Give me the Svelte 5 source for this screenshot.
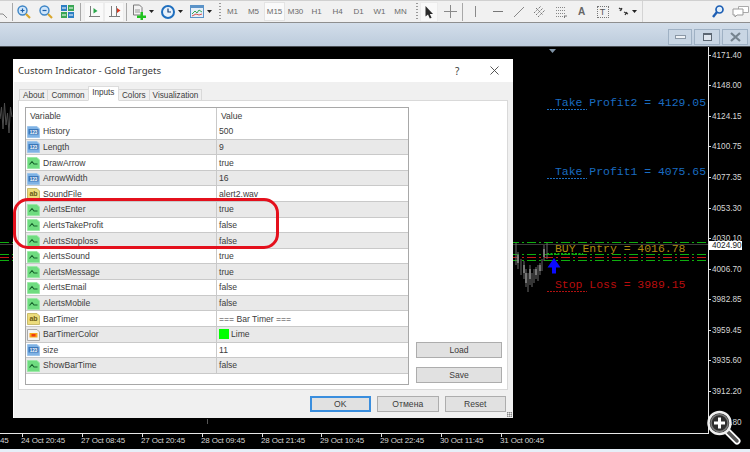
<script>
  const rows = [
    ['num','History','500'],['num','Length','9'],['bool','DrawArrow','true'],['num','ArrowWidth','16'],
    ['str','SoundFile','alert2.wav'],['bool','AlertsEnter','true'],['bool','AlertsTakeProfit','false'],['bool','AlertsStoploss','false'],
    ['bool','AlertsSound','true'],['bool','AlertsMessage','true'],['bool','AlertsEmail','false'],['bool','AlertsMobile','false'],
    ['str','BarTimer','=== Bar Timer ==='],['color','BarTimerColor','Lime'],['num','size','11'],['bool','ShowBarTime','false']
  ];
  const prices = [['4171.40',8],['4148.00',38],['4124.15',69],['4100.75',99],['4077.35',130],['4053.30',161],['4030.10',191],['4006.70',222],['3982.85',252],['3959.45',283],['3935.60',313],['3912.20',344],['3888.80',375]];
  const times = [['24 Oct 20:45',21],['27 Oct 08:45',81],['27 Oct 20:45',141],['28 Oct 09:45',201],['28 Oct 21:45',261],['29 Oct 10:45',320],['29 Oct 22:45',380],['30 Oct 11:45',440],['31 Oct 00:45',500]];
  const periods = ['M1','M5','M15','M30','H1','H4','D1','W1','MN'];
  const tabs = ['About','Common','Inputs','Colors','Visualization'];
</script>

{#snippet rowIcon(kind)}
  <svg class="ricon" viewBox="0 0 13 13" width="13" height="13">
    {#if kind === 'num'}
      <path d="M.5 1.500h9.500l2.500 2.500v8.500H.5z" fill="#7fb2e4" stroke="#9cc5ec"/>
      <rect x="1.500" y="4" width="10" height="5.500" fill="#3a76b8"/>
      <text x="6.500" y="8.700" class="itxt" fill="#fff">123</text>
    {:else if kind === 'bool'}
      <path d="M.5 1.500h9.500l2.500 2.500v8.500H.5z" fill="#6fdc80" stroke="#9be9a6"/>
      <path d="M2.500 8.500 5 5.500l2 2.500h3.500" fill="none" stroke="#14602a" stroke-width="1.100"/>
    {:else if kind === 'str'}
      <path d="M.5 1.500h9.500l2.500 2.500v8.500H.5z" fill="#ecdc7c" stroke="#c9bb6a"/>
      <text x="6.500" y="9" class="itxt2" fill="#6b5a14">ab</text>
    {:else}
      <path d="M.5 1.500h9.500l2.500 2.500v8.500H.5z" fill="#f4f4f4" stroke="#a9a9a9"/>
      <rect x="2.500" y="5" width="8" height="4.500" fill="#f8a51c"/>
      <rect x="4.500" y="6" width="4" height="2.500" fill="#ee3a14"/>
    {/if}
  </svg>
{/snippet}

{#snippet caret()}
  <svg class="caret" viewBox="0 0 5 3" width="5" height="3"><path d="M0 0h5L2.500 3z" fill="#222"/></svg>
{/snippet}

<div class="screen">
  <header class="toolbar">
    <div class="tb w12"><svg viewBox="0 0 12 20" width="12" height="20"><path d="M0 12h3l4 4" fill="none" stroke="#8a8a8a"/></svg></div>
    <div class="sep"></div>
    <div class="tb w22"><svg viewBox="0 0 14 14" width="14" height="14"><circle cx="5.500" cy="5.500" r="4.500" fill="#cfe6fb" stroke="#3d85c6" stroke-width="1.400"/><path d="M3.500 5.500h4M5.500 3.500v4" stroke="#1c5fa8" stroke-width="1.200"/><path d="m9 9 4 4" stroke="#d8a62c" stroke-width="2.200"/></svg></div>
    <div class="tb w22"><svg viewBox="0 0 14 14" width="14" height="14"><circle cx="5.500" cy="5.500" r="4.500" fill="#cfe6fb" stroke="#3d85c6" stroke-width="1.400"/><path d="M3.500 5.500h4" stroke="#1c5fa8" stroke-width="1.200"/><path d="m9 9 4 4" stroke="#d8a62c" stroke-width="2.200"/></svg></div>
    <div class="tb w20"><svg viewBox="0 0 13 13" width="13" height="13"><rect width="6" height="6" fill="#2d7fc4"/><rect x="7" width="6" height="6" fill="#3aa655"/><rect y="7" width="6" height="6" fill="#3aa655"/><rect x="7" y="7" width="6" height="6" fill="#2d7fc4"/><path d="M1 3h4M8 3h4M1 10h4M8 10h4" stroke="#fff"/></svg></div>
    <div class="sep gap3"></div>
    <div class="tb w20 boxed"><svg viewBox="0 0 12 13" width="12" height="13"><path d="M2.500 1v10.500H12M1 11.500h2" fill="none" stroke="#7d7d7d"/><path d="M5.500 3v5.500L9.500 6z" fill="#2aa84a"/></svg></div>
    <div class="tb w20 boxed"><svg viewBox="0 0 13 13" width="13" height="13"><path d="M3.500 1v11M1 11.500h11M8.500 1v10" fill="none" stroke="#7d7d7d"/><path d="M12.500 5.500 9 3v5z" fill="#d93a22"/></svg></div>
    <div class="sep gap2"></div>
    <div class="tb w31"><svg viewBox="0 0 14 16" width="14" height="16"><path d="M1.500 1h6L10 3.500V11H1.500z" fill="#f3f3f3" stroke="#7a7a7a"/><path d="M3 6h5M3 8h5" stroke="#999"/><path d="M5 11.500h3.500V8H11v3.500h3V14h-3v2H8.500v-2H5z" fill="#1ec21e"/></svg>{@render caret()}</div>
    <div class="tb w27"><svg viewBox="0 0 14 14" width="14" height="14"><circle cx="7" cy="7" r="6" fill="#e9f2fb" stroke="#1f6fbf" stroke-width="2"/><path d="M7 3.500V7h3" fill="none" stroke="#143f78" stroke-width="1.200"/></svg>{@render caret()}</div>
    <div class="tb w32"><svg viewBox="0 0 14 13" width="14" height="13"><rect x=".5" y=".5" width="13" height="12" fill="#e6eff8" stroke="#5b93c8"/><rect x=".5" y=".5" width="13" height="2.500" fill="#5b93c8"/><path d="M2 9l3-3 2 2 2-3 3 2" fill="none" stroke="#3aa655"/><path d="M2 11l4-2 3 1 3-1" fill="none" stroke="#d9534f"/></svg>{@render caret()}</div>
    <div class="grip g1"></div>
    <div class="periods">
      {#each periods as p}<span class="period" class:active={p === 'M15'}>{p}</span>{/each}
    </div>
    <div class="grip g2"></div>
    <div class="tb w18 boxed"><svg viewBox="0 0 10 14" width="10" height="14"><path d="M1.500 1v10.500l2.500-2 1.800 4 1.800-.8-1.800-3.800H9z" fill="#2a2a2a"/></svg></div>
    <div class="tb w24"><svg viewBox="0 0 13 13" width="13" height="13"><path d="M6.500 0v13M0 6.500h13" stroke="#8a8a8a"/></svg></div>
    <div class="sep"></div>
    <div class="tb w24"><svg viewBox="0 0 3 11" width="3" height="11"><path d="M1.500 0v11" stroke="#8a8a8a"/></svg></div>
    <div class="tb w21"><svg viewBox="0 0 10 3" width="10" height="3"><path d="M0 1.500h10" stroke="#777"/></svg></div>
    <div class="tb w21"><svg viewBox="0 0 10 10" width="10" height="10"><path d="M0 10 10 0" stroke="#888"/></svg></div>
    <div class="tb w21"><svg viewBox="0 0 13 13" width="13" height="13"><path d="M1 8 8 1M3 10l7-7M5 12l7-7M3 3l7 7" stroke="#777" stroke-dasharray="1.500 .8"/></svg></div>
    <div class="tb w21"><svg viewBox="0 0 12 12" width="12" height="12"><path d="M1 1.500h9M1 4.500h9M1 7.500h9M1 10.500h7" stroke="#888" stroke-dasharray="1 1"/><path d="M9 10h3M9.500 10v2" stroke="#777"/></svg></div>
    <div class="tb w21 bigA">A</div>
    <div class="tb w21"><span class="tbox">T</span></div>
    <div class="tb w29"><svg viewBox="0 0 11 9" width="11" height="9"><path d="M1 1l3 2M2 4l2-3M6 5l4 2M7 8l2-3" stroke="#333" stroke-width="1.300"/></svg>{@render caret()}</div>
    <div class="sep light"></div>
    <div class="spring"></div>
    <div class="tb w22"><svg viewBox="0 0 12 13" width="12" height="13"><circle cx="7.500" cy="4.500" r="3.500" fill="#e2effb" stroke="#1e5fb4" stroke-width="1.700"/><path d="m5 7-4 5" stroke="#1e5fb4" stroke-width="2.400"/></svg></div>
    <div class="tb chat"><svg viewBox="0 0 18 13" width="18" height="13"><path d="M6.500 1.500h10v6h-10z" fill="#fff" stroke="#aaa"/><path d="M1 4h10v6H5l-2 2v-2H1z" fill="#fff" stroke="#999"/></svg></div>
  </header>

  <div class="mdibar">
    <button class="winbtn" aria-label="Minimize"><span class="wmin"></span></button>
    <button class="winbtn w26" aria-label="Restore"><span class="wmax"></span></button>
    <button class="winbtn w26" aria-label="Close"><svg viewBox="0 0 11 10" width="11" height="10"><path d="M1 1l9 8M10 1l-9 8" stroke="#76848f" stroke-width="2.200"/></svg></button>
  </div>

  <main class="chart">
    <svg class="plot" viewBox="0 0 750 402" width="750" height="402">
      <path d="M549 2h7l-3.500 4z" fill="#7f93a6"/>
      <g fill="none">
        <path d="M0 72 1.500 60 3 82 4.500 56 6 78 7.500 66 9 86 10.500 60 12 70" stroke="#4d4d4d"/>
        <path d="M207.500 372v5" stroke="#555"/>
        <path d="M0 197.500h708" stroke="#3a3a3a"/>
        <path d="M0 195.500h708M0 207.500h708M0 213.500h708" stroke="#0fae0f" stroke-dasharray="9 3 2 3"/>
        <path d="M0 210.500h708" stroke="#c81616" stroke-dasharray="9 3 2 3"/>
        <path d="M547 62.500h40M547 131.500h40" stroke="#1a6cc0" stroke-dasharray="2 1"/>
        <path d="M547 244.500h40" stroke="#b01010" stroke-dasharray="2 1"/>
        <path d="M547 207h36" stroke="#0fae0f" stroke-width="2" stroke-dasharray="2 1.500"/>
        <path d="M516 196v22M518 205v17M521 212v16M524 214v18M526 222v18M528 226v19M530 218v20M532 226v14M534 222v14M536 220v12M538 218v16M540 216v12M542 212v12M544 198v16M547 196v16" stroke="#6a6a6a"/>
        <path d="M518 208v8M524 218v8M526 226v10M530 222v10M536 222v6M540 218v6M544 202v8" stroke="#8c8c8c" stroke-width="1.500"/>
      </g>
      <path d="M554 211l6.500 9.500H556v6h-4v-6h-4.500z" fill="#0a0aff"/>
    </svg>

    <span class="mark blue tp2">Take Profit2 = 4129.05</span>
    <span class="mark blue tp1">Take Profit1 = 4075.65</span>
    <span class="mark gold entry">BUY Entry = 4016.78</span>
    <span class="mark red stop">Stop Loss = 3989.15</span>

    <div class="axis-y"></div>
    <div class="axis-x"></div>
    {#each prices as [v, y]}
      <span class="price" style="top:{y - 5.5}px">{v}</span>
      <span class="ptick" style="top:{y}px"></span>
    {/each}
    <span class="price now">4024.90</span>
    <span class="time clip">45</span>
    {#each times as [t, x]}
      <span class="time" style="left:{x}px">{t}</span>
      <span class="ttick" style="left:{x + 1}px"></span>
    {/each}

    <section class="dialog">
      <div class="dtitle">
        <span>Custom Indicator - Gold Targets</span>
        <span class="help">?</span>
        <svg class="close" viewBox="0 0 9 9" width="9" height="9"><path d="M.5.500l8 8M8.500.500l-8 8" stroke="#444" stroke-width=".9"/></svg>
      </div>
      <div class="dbody">
        <div class="tabs">
          {#each tabs as t}<span class="tab" class:on={t === 'Inputs'}>{t}</span>{/each}
        </div>
        <div class="panel">
          <div class="list">
            <div class="row head"><span class="c1 plain">Variable</span><span class="c2 plain">Value</span></div>
            {#each rows as [k, n, v], i}
              <div class="row" class:alt={i % 2 === 1}>
                <span class="c1">{@render rowIcon(k)}{n}</span>
                <span class="c2">{#if k === 'color'}<i class="swatch"></i>{/if}{v}</span>
              </div>
            {/each}
          </div>
          <div class="side">
            <button class="btn">Load</button>
            <button class="btn">Save</button>
          </div>
        </div>
        <div class="foot">
          <button class="btn ok">OK</button>
          <button class="btn">Отмена</button>
          <button class="btn">Reset</button>
        </div>
      </div>
      <i class="dgrip"></i>
    </section>
    <div class="callout"></div>

    <svg class="zoomer" viewBox="0 0 48 48" width="48" height="48">
      <path d="M29 29l10 10" stroke="#fff" stroke-width="7" stroke-linecap="round"/>
      <path d="M29 29l10 10" stroke="#555" stroke-width="3.500" stroke-linecap="round"/>
      <circle cx="21.500" cy="21" r="11" fill="#2e2e2e" stroke="#f0f0f0" stroke-width="2.500"/>
      <circle cx="21.500" cy="21" r="8.500" fill="#2e2e2e" stroke="#7a7a7a" stroke-width="1.500"/>
      <path d="M21.500 15.500v11M16 21h11" stroke="#fff" stroke-width="3"/>
    </svg>
  </main>
  <div class="strip"></div>
</div>

<style>
  :global(body) { margin: 0; background: #000; }
  button { font: inherit; padding: 0; }
  .screen { width: 750px; height: 452px; overflow: hidden; display: flex; flex-direction: column; font-family: "Liberation Sans", Arial, sans-serif; }

  .toolbar { height: 23px; flex: none; display: flex; align-items: center; background: #f1f1f1; border-top: 1px solid #d0d0d0; border-bottom: 1px solid #8e8e8e; box-sizing: border-box; }
  .tb { height: 20px; flex: none; display: flex; align-items: center; justify-content: center; box-sizing: border-box; gap: 3px; }
  .w12 { width: 12px; } .w18 { width: 18px; } .w20 { width: 20px; } .w21 { width: 21px; } .w22 { width: 22px; } .w24 { width: 24px; } .w27 { width: 27px; } .w29 { width: 29px; } .w31 { width: 31px; } .w32 { width: 32px; }
  .boxed { background: #f9f9f9; box-shadow: inset 0 0 0 1px #ececec; }
  .sep { width: 1px; height: 18px; background: #a8a8a8; flex: none; }
  .gap3 { margin: 0 3px; }
  .gap2 { margin: 0 0 0 2px; }
  .light { height: 21px; background: #d4d4d4; }
  .grip { width: 2px; height: 17px; flex: none; background: repeating-linear-gradient(#999 0 1px, transparent 1px 3px); }
  .g1 { margin: 0 1px 0 2px; }
  .g2 { margin: 0 2px 0 5px; }
  .periods { display: flex; font-size: 8px; color: #6a6a6a; }
  .period { width: 21px; height: 19px; line-height: 19px; text-align: center; flex: none; }
  .period.active { background: #fafafa; box-shadow: inset 0 0 0 1px #e4e4e4; }
  .bigA { font-size: 10px; font-weight: 700; color: #666; }
  .tbox { width: 10px; height: 10px; border: 1px dotted #777; font-size: 9px; line-height: 10px; text-align: center; color: #555; }
  .spring { flex: 1; }
  .chat { width: 18px; margin: 0 0 0 3px; overflow: hidden; }
  .caret { flex: none; }

  .mdibar { height: 24px; flex: none; box-sizing: border-box; display: flex; justify-content: flex-end; align-items: flex-start; gap: 2px; padding: 6px 2px 0 0; background: linear-gradient(#d3deea, #bccbdc); border-bottom: 1px solid #4a4f55; }
  .winbtn { width: 24px; height: 16px; border: 1px solid #9fb1c4; background: #c9d6e4; display: flex; align-items: center; justify-content: center; }
  .winbtn.w26 { width: 26px; }
  .wmin { width: 9px; height: 2px; background: #eef2f6; border: 1px solid #8b98a6; }
  .wmax { width: 7px; height: 6px; background: #dfe6ee; border: 1px solid #5b6672; box-shadow: inset 0 1px 0 #5b6672; }

  .chart { position: relative; height: 402px; flex: none; background: #000; overflow: hidden; }
  .plot { position: absolute; left: 0; top: 0; display: block; }
  .mark { position: absolute; left: 555px; font-family: "Liberation Mono", "Courier New", monospace; font-size: 11.450px; line-height: 12px; white-space: pre; }
  .blue { color: #1a6cc0; } .gold { color: #b08a12; } .red { color: #b80d0d; }
  .tp2 { top: 50px; } .tp1 { top: 119px; } .entry { top: 196px; } .stop { top: 232px; }

  .axis-y { position: absolute; left: 708px; top: 0; width: 1px; height: 387px; background: #e8e8e8; }
  .axis-x { position: absolute; left: 0; top: 386px; width: 709px; height: 1px; background: #e8e8e8; }
  .price { position: absolute; left: 712px; font-size: 8.200px; line-height: 11px; color: #d6d6d6; }
  .price.now { left: 709px; top: 194px; width: 33px; height: 9px; line-height: 9px; padding-left: 3px; box-sizing: border-box; background: #fff; color: #222; }
  .ptick { position: absolute; left: 709px; width: 2px; height: 1px; background: #ddd; }
  .time { position: absolute; top: 388px; font-size: 8px; line-height: 11px; color: #d6d6d6; letter-spacing: -.15px; white-space: nowrap; }
  .clip { left: 0; }
  .ttick { position: absolute; top: 387px; width: 1px; height: 3px; background: #ddd; }

  .dialog { position: absolute; left: 13px; top: 12px; width: 500px; height: 359px; background: #fff; display: flex; flex-direction: column; }
  .dtitle { height: 23px; flex: none; display: flex; align-items: center; padding-left: 5px; font-family: "Noto Sans", sans-serif; font-size: 9.600px; color: #3a3a3a; position: relative; }
  .help { position: absolute; left: 442px; font-size: 10px; }
  .close { position: absolute; left: 477px; top: 7px; }
  .dbody { flex: 1; background: #f0f0f0; padding: 5px 5px 0 4px; display: flex; flex-direction: column; font-size: 8.600px; color: #3c3c3c; border-left: 1px solid #fff; min-height: 0; box-sizing: border-box; }
  .tabs { height: 14px; flex: none; display: flex; align-items: flex-end; padding-left: 1px; margin-bottom: -1px; position: relative; z-index: 1; font-size: 8.200px; }
  .tab { height: 12px; line-height: 11px; padding: 0 3px; border: 1px solid #d9d9d9; margin-right: -1px; box-sizing: border-box; background: #f0f0f0; }
  .tab.on { height: 15px; line-height: 12px; background: #fff; padding: 0 3.500px; border-color: #dcdcdc; border-bottom-color: #fff; position: relative; }
  .panel { height: 290px; flex: none; box-sizing: border-box; background: #fff; border: 1px solid #d9d9d9; padding: 6px 5px 0 6px; display: flex; gap: 7px; }
  .list { width: 384px; height: 278px; flex: none; box-sizing: border-box; border: 1px solid #a8a8a8; background: #fff; display: flex; flex-direction: column; }
  .row { height: 15.620px; flex: none; box-sizing: border-box; display: grid; grid-template-columns: 191px 1fr; border-bottom: 1px solid #c9c9c9; background: #fff; align-items: stretch; }
  .row.alt { background: #e9e9e9; }
  .row.head { height: 16px; border-bottom: 0; }
  .c1, .c2 { display: flex; align-items: center; white-space: nowrap; overflow: hidden; }
  .c1 { border-right: 1px solid #c9c9c9; padding-left: 1px; gap: 3px; }
  .c2 { padding-left: 2px; }
  .plain.c1 { padding-left: 4px; } .plain.c2 { padding-left: 4px; }
  .ricon { flex: none; }
  .itxt { font-family: "Liberation Sans", sans-serif; font-size: 4.500px; text-anchor: middle; font-weight: 700; }
  .itxt2 { font-family: "Liberation Sans", sans-serif; font-size: 7px; text-anchor: middle; font-weight: 700; }
  .swatch { width: 10px; height: 10px; background: #00ff00; margin-right: 2px; flex: none; }
  .side { flex: 1; display: flex; flex-direction: column; justify-content: flex-end; gap: 9px; padding: 0 0 6px 0; }
  .btn { display: block; width: 86px; height: 16px; box-sizing: border-box; background: #e1e1e1; border: 1px solid #adadad; color: #3c3c3c; font-size: 8.600px; line-height: 13px; text-align: center; }
  .foot { flex: 1; display: flex; justify-content: flex-end; gap: 6px; padding: 6px 2px 0 0; }
  .foot .btn { width: 61.500px; }
  .foot .ok { border: 2px solid #3a8ede; line-height: 11px; }
  .dgrip { position: absolute; right: 1px; bottom: 1px; width: 5px; height: 5px; background: repeating-linear-gradient(90deg, #bbb 0 1px, transparent 1px 2px), repeating-linear-gradient(#bbb 0 1px, transparent 1px 2px); background-blend-mode: multiply; }
  .callout { position: absolute; left: 13px; top: 151px; width: 266px; height: 51px; box-sizing: border-box; border: 3px solid #e4101c; border-radius: 15px; }
  .zoomer { position: absolute; left: 698px; top: 355px; }
  .strip { flex: 1; background: #e6eff8; }
</style>
